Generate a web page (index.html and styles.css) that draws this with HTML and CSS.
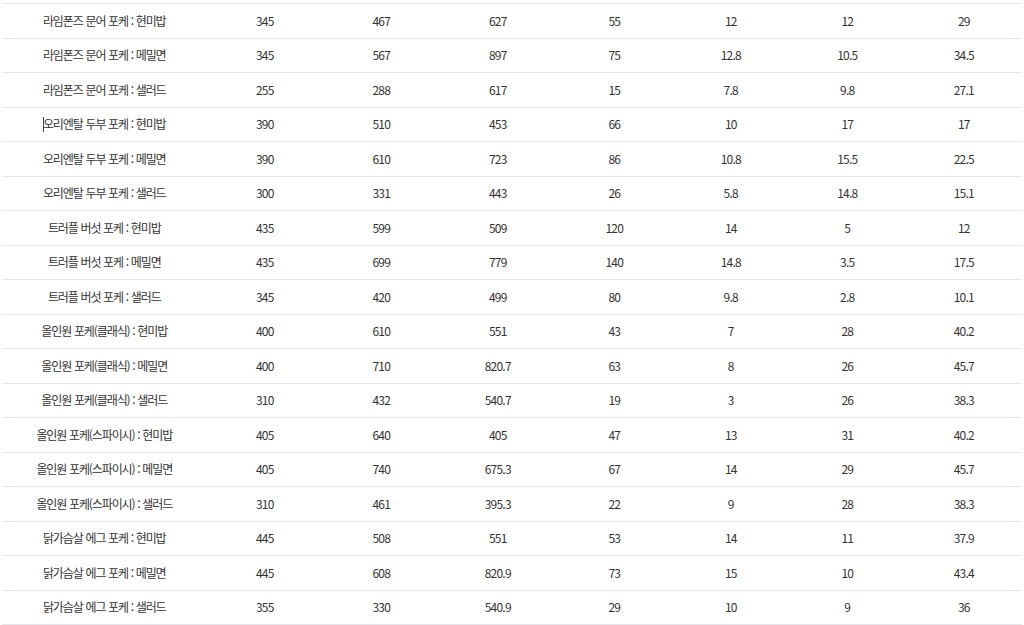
FILE: index.html
```html
<!DOCTYPE html>
<html lang="ko">
<head>
<meta charset="utf-8">
<link rel="stylesheet" href="styles.css">
</head>
<body>
<table class="nutri">
<colgroup><col class="c-name"><col span="7" class="c-num"></colgroup>
<tbody>
<tr><td>라임폰즈 문어 포케 : 현미밥</td><td>345</td><td>467</td><td>627</td><td>55</td><td>12</td><td>12</td><td>29</td></tr>
<tr><td>라임폰즈 문어 포케 : 메밀면</td><td>345</td><td>567</td><td>897</td><td>75</td><td>12.8</td><td>10.5</td><td>34.5</td></tr>
<tr><td>라임폰즈 문어 포케 : 샐러드</td><td>255</td><td>288</td><td>617</td><td>15</td><td>7.8</td><td>9.8</td><td>27.1</td></tr>
<tr><td><span class="caret"></span>오리엔탈 두부 포케 : 현미밥</td><td>390</td><td>510</td><td>453</td><td>66</td><td>10</td><td>17</td><td>17</td></tr>
<tr><td>오리엔탈 두부 포케 : 메밀면</td><td>390</td><td>610</td><td>723</td><td>86</td><td>10.8</td><td>15.5</td><td>22.5</td></tr>
<tr><td>오리엔탈 두부 포케 : 샐러드</td><td>300</td><td>331</td><td>443</td><td>26</td><td>5.8</td><td>14.8</td><td>15.1</td></tr>
<tr><td>트러플 버섯 포케 : 현미밥</td><td>435</td><td>599</td><td>509</td><td>120</td><td>14</td><td>5</td><td>12</td></tr>
<tr><td>트러플 버섯 포케 : 메밀면</td><td>435</td><td>699</td><td>779</td><td>140</td><td>14.8</td><td>3.5</td><td>17.5</td></tr>
<tr><td>트러플 버섯 포케 : 샐러드</td><td>345</td><td>420</td><td>499</td><td>80</td><td>9.8</td><td>2.8</td><td>10.1</td></tr>
<tr><td>올인원 포케(클래식) : 현미밥</td><td>400</td><td>610</td><td>551</td><td>43</td><td>7</td><td>28</td><td>40.2</td></tr>
<tr><td>올인원 포케(클래식) : 메밀면</td><td>400</td><td>710</td><td>820.7</td><td>63</td><td>8</td><td>26</td><td>45.7</td></tr>
<tr><td>올인원 포케(클래식) : 샐러드</td><td>310</td><td>432</td><td>540.7</td><td>19</td><td>3</td><td>26</td><td>38.3</td></tr>
<tr><td>올인원 포케(스파이시) : 현미밥</td><td>405</td><td>640</td><td>405</td><td>47</td><td>13</td><td>31</td><td>40.2</td></tr>
<tr><td>올인원 포케(스파이시) : 메밀면</td><td>405</td><td>740</td><td>675.3</td><td>67</td><td>14</td><td>29</td><td>45.7</td></tr>
<tr><td>올인원 포케(스파이시) : 샐러드</td><td>310</td><td>461</td><td>395.3</td><td>22</td><td>9</td><td>28</td><td>38.3</td></tr>
<tr><td>닭가슴살 에그 포케 : 현미밥</td><td>445</td><td>508</td><td>551</td><td>53</td><td>14</td><td>11</td><td>37.9</td></tr>
<tr><td>닭가슴살 에그 포케 : 메밀면</td><td>445</td><td>608</td><td>820.9</td><td>73</td><td>15</td><td>10</td><td>43.4</td></tr>
<tr><td>닭가슴살 에그 포케 : 샐러드</td><td>355</td><td>330</td><td>540.9</td><td>29</td><td>10</td><td>9</td><td>36</td></tr>
</tbody>
</table>
</body>
</html>
```
FILE: styles.css
```css
html, body {
  margin: 0;
  padding: 0;
  background: #fff;
}
body {
  padding: 3px 2px 0;
  font-family: "Noto Sans CJK KR", "Noto Sans", sans-serif;
  color: #333;
}
.nutri {
  width: 1020px;
  border-collapse: collapse;
  table-layout: fixed;
  border-top: 1px solid #e6e6ef;
}
.c-name { width: 204.5px; }
.nutri td {
  height: 33.5px;
  padding: 0;
  text-align: center;
  vertical-align: middle;
  font-size: 12px;
  letter-spacing: -0.8px;
  line-height: 16px;
  border-bottom: 1px solid #e6e6ef;
}
.nutri td:first-child {
  letter-spacing: -1.1px;
  word-spacing: 0.5px;
}
.caret {
  display: inline-block;
  width: 1px;
  height: 15px;
  background: #444;
  vertical-align: -3px;
  margin-right: -1px;
}
```
